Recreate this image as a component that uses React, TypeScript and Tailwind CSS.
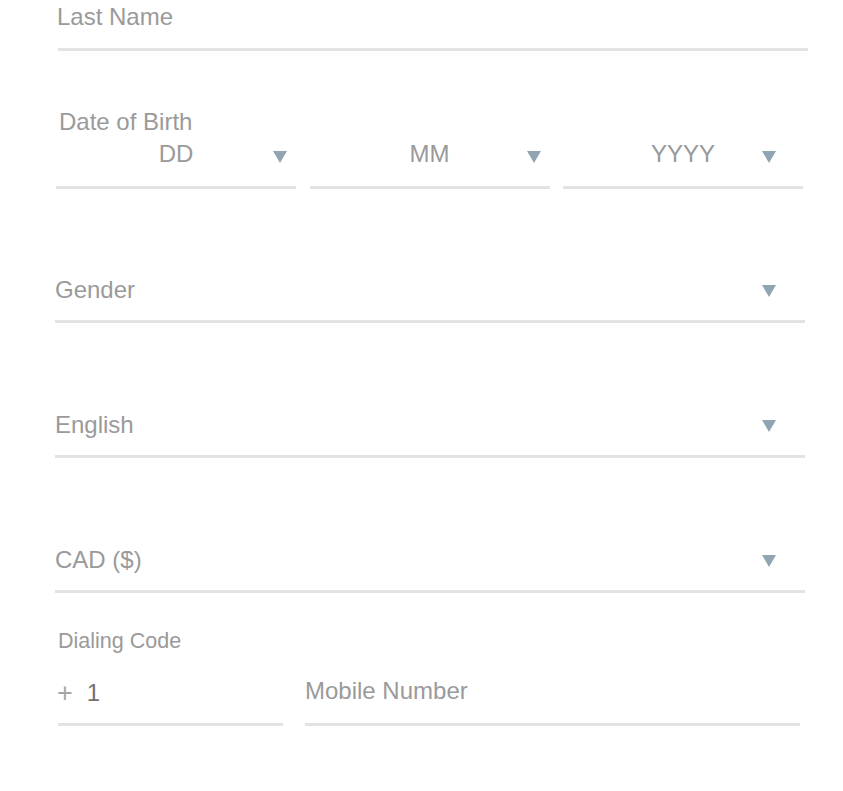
import type { ReactNode } from "react";

const Caret = ({ className }: { className: string }) => (
  <svg className={className} width="14" height="12" viewBox="0 0 14 12" aria-hidden="true">
    <path d="M0 0 H14 L7 12 Z" fill="#8fa5b1" />
  </svg>
);

function SelectField({ label }: { label: string }) {
  return (
    <div className="relative ml-[55px] mt-[88px] h-[47px] w-[750px] border-b-[3px] border-[#e3e3e3]">
      <span>{label}</span>
      <Caret className="pointer-events-none absolute right-[29px] top-[9px]" />
    </div>
  );
}

function DateSelect({ label, caret }: { label: string; caret: string }) {
  return (
    <div className="relative h-[49px] w-[240px] border-b-[3px] border-[#e3e3e3] text-center">
      <span>{label}</span>
      <Caret className={caret} />
    </div>
  );
}

function Row({ children }: { children: ReactNode }) {
  return <div className="ml-[56px] mt-[4px] flex gap-[13.5px]">{children}</div>;
}

export default function App() {
  return (
    <div className="h-[791px] w-[843px] overflow-hidden bg-white font-['Liberation_Sans',Arial,sans-serif] text-[24px] leading-[28px] text-[#9a9a9a]">
      {/* Last name */}
      <div className="ml-[58px] mt-[3px] h-[48px] w-[750px] border-b-[3px] border-[#e3e3e3]">
        <span className="-ml-[1px]">Last Name</span>
      </div>

      {/* Date of birth */}
      <div className="ml-[59px] mt-[57px] h-[28px]">Date of Birth</div>
      <Row>
        <DateSelect label="DD" caret="pointer-events-none absolute right-[9px] top-[11px]" />
        <DateSelect label="MM" caret="pointer-events-none absolute right-[9px] top-[11px]" />
        <DateSelect label="YYYY" caret="pointer-events-none absolute right-[27px] top-[11px]" />
      </Row>

      <div className="mt-[-1px]" />
      <SelectField label="Gender" />
      <SelectField label="English" />
      <SelectField label="CAD ($)" />

      {/* Phone */}
      <div className="ml-[58px] mt-[36px] h-[25px] text-[21.5px] leading-[25px]">Dialing Code</div>
      <div className="ml-[58px] mt-[23px] flex gap-[22px]">
        <div className="flex h-[49px] w-[225px] items-start border-b-[3px] border-[#e3e3e3] pt-[2px]">
          <span className="-ml-[1px] text-[27px] text-[#a6a6a6]">+</span>
          <span className="ml-[14px] text-[#707070]">1</span>
        </div>
        <div className="h-[49px] w-[495px] border-b-[3px] border-[#e3e3e3]">
          <span>Mobile Number</span>
        </div>
      </div>
    </div>
  );
}
